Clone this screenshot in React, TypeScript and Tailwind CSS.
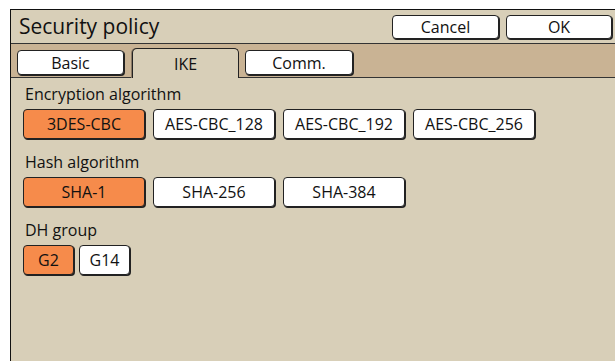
import React from "react";

const font = { fontFamily: '"Open Sans", "Noto Sans", sans-serif' };

function Btn({ label, active, w }: { label: string; active?: boolean; w: string }) {
  return (
    <div
      className={`${w} h-[30px] flex items-center justify-center rounded-[4px] border border-[#222] shadow-[1px_1px_0_#222] text-[16px] text-[#111] ${
        active ? "bg-[#f68b4b]" : "bg-white"
      }`}
    >
      {label}
    </div>
  );
}

export default function App() {
  return (
    <div className="w-[615px] h-[361px] bg-white pt-[9px] pl-[10px] overflow-hidden" style={font}>
      <div className="h-[352px] flex flex-col border-l border-t border-[#111] bg-[#d8cfb8]">
        {/* Title bar */}
        <div className="h-[34px] shrink-0 flex items-center justify-between border-b border-[#333] pl-[8px] pr-[3px]">
          <div className="text-[21px] leading-none text-[#111]">Security policy</div>
          <div className="flex gap-[7px]">
            <div className="w-[107px] h-[24px] flex items-center justify-center rounded-[4px] border border-[#222] shadow-[1px_1px_0_#222] bg-white text-[16px] text-[#111]">
              Cancel
            </div>
            <div className="w-[106px] h-[24px] flex items-center justify-center rounded-[4px] border border-[#222] shadow-[1px_1px_0_#222] bg-white text-[16px] text-[#111]">
              OK
            </div>
          </div>
        </div>
        {/* Tab strip */}
        <div className="h-[34px] shrink-0 flex items-end gap-0 bg-[#c9b394] border-b border-[#333] pl-[6px]">
          <div className="w-[107px] h-[25px] mb-[2px] flex items-center justify-center rounded-[4px] border border-[#222] shadow-[1px_1px_0_#222] bg-white text-[16px] text-[#111]">
            Basic
          </div>
          <div className="ml-[8px] w-[107px] h-[30px] -mb-px flex items-center justify-center rounded-t-[5px] border border-b-0 border-[#222] bg-[#d8cfb8] text-[16px] text-[#111] shadow-[-1px_0_0_#8a7a66]">
            IKE
          </div>
          <div className="ml-[6px] w-[108px] h-[25px] mb-[2px] flex items-center justify-center rounded-[4px] border border-[#222] shadow-[1px_1px_0_#222] bg-white text-[16px] text-[#111]">
            Comm.
          </div>
        </div>
        {/* Content */}
        <div className="flex flex-col pl-[12px] pt-[6px]">
          <div className="h-[21px] leading-[21px] text-[16px] text-[#111] pl-[2px]">Encryption algorithm</div>
          <div className="mt-[4px] flex gap-[8px]">
            <Btn label="3DES-CBC" active w="w-[122px]" />
            <Btn label="AES-CBC_128" w="w-[122px]" />
            <Btn label="AES-CBC_192" w="w-[122px]" />
            <Btn label="AES-CBC_256" w="w-[122px]" />
          </div>
          <div className="mt-[13px] h-[21px] leading-[21px] text-[16px] text-[#111] pl-[2px]">Hash algorithm</div>
          <div className="mt-[4px] flex gap-[8px]">
            <Btn label="SHA-1" active w="w-[122px]" />
            <Btn label="SHA-256" w="w-[122px]" />
            <Btn label="SHA-384" w="w-[122px]" />
          </div>
          <div className="mt-[13px] h-[21px] leading-[21px] text-[16px] text-[#111] pl-[2px]">DH group</div>
          <div className="mt-[4px] flex gap-[5px]">
            <Btn label="G2" active w="w-[51px]" />
            <Btn label="G14" w="w-[51px]" />
          </div>
        </div>
      </div>
    </div>
  );
}
